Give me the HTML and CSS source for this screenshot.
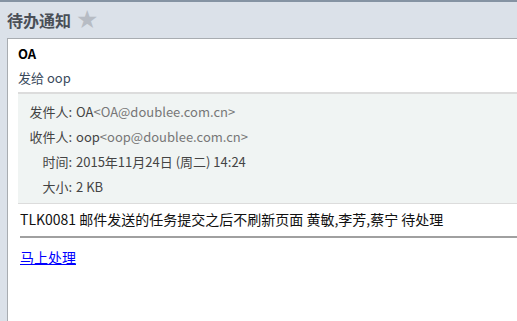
FILE: index.html
```html
<!DOCTYPE html>
<html lang="zh-CN">
<head>
    <meta charset="UTF-8">
    <title>待办通知</title>
    <link rel="stylesheet" href="styles.css">
</head>
<body>
    <div class="title-bar">
        <h1>待办通知</h1>
        <span class="star">&#9733;</span>
    </div>

    <div class="mail">
        <div class="mail-top">
            <div class="from">OA</div>
            <div class="to">发给 oop</div>
        </div>

        <div class="mail-info">
            <div class="row"><span class="label">发件人:</span><span class="value">OA<span class="addr">&lt;OA@doublee.com.cn&gt;</span></span></div>
            <div class="row"><span class="label">收件人:</span><span class="value">oop<span class="addr">&lt;oop@doublee.com.cn&gt;</span></span></div>
            <div class="row"><span class="label">时间:</span><span class="value">2015年11月24日 (周二) 14:24</span></div>
            <div class="row"><span class="label">大小:</span><span class="value">2 KB</span></div>
        </div>

        <div class="mail-body">
            <p class="subject">TLK0081 邮件发送的任务提交之后不刷新页面 黄敏,李芳,蔡宁 待处理</p>
            <hr>
            <a href="#">马上处理</a>
        </div>
    </div>
</body>
</html>
```

FILE: styles.css
```css
html, body {
    height: 100%;
}

body {
    margin: 0;
    background-color: #dbe1e9;
    border-top: 2px solid #8593a3;
    box-sizing: border-box;
    font-family: "Noto Sans CJK SC", "Noto Sans", sans-serif;
    color: #333;
    display: flex;
    flex-direction: column;
}

.title-bar {
    display: flex;
    align-items: center;
    height: 36px;
    padding-left: 7px;
    gap: 5px;
}

.title-bar h1 {
    margin: 0;
    font-size: 16px;
    font-weight: bold;
    color: #4a4f57;
    line-height: 20px;
}

.star {
    font-size: 25px;
    color: #b7bcc4;
    line-height: 20px;
    font-family: "DejaVu Sans", sans-serif;
}

.mail {
    flex: 1;
    margin-left: 7px;
    background-color: white;
    border-top: 1px solid #a8acb1;
    border-left: 1px solid #a8acb1;
    padding-left: 10px;
}

.mail-top {
    padding-top: 6px;
    height: 47px;
}

.from {
    font-size: 13px;
    font-weight: bold;
    color: #000;
    line-height: 18px;
}

.to {
    font-size: 13px;
    color: #3a4a5c;
    line-height: 18px;
    margin-top: 6px;
}

.mail-info {
    background-color: #f0f4f3;
    border-top: 2px solid #dcdcdc;
    border-bottom: 1px solid #dcdcdc;
    padding: 5px 0 4px 0;
}

.row {
    display: flex;
    font-size: 13px;
    line-height: 25px;
    color: #444;
}

.label {
    width: 54px;
    text-align: right;
    margin-right: 4px;
}

.addr {
    color: #777;
}

.mail-body {
    padding: 0 0 0 2px;
}

.subject {
    margin: 5px 0 0 0;
    font-size: 14px;
    line-height: 20px;
    color: #111;
}

hr {
    margin: 7px 0 0 0;
    border: none;
    border-top: 2px solid #a0a0a0;
}

.mail-body a {
    display: inline-block;
    margin-top: 10px;
    font-size: 14px;
    line-height: 18px;
    color: #0000ff;
}
```
